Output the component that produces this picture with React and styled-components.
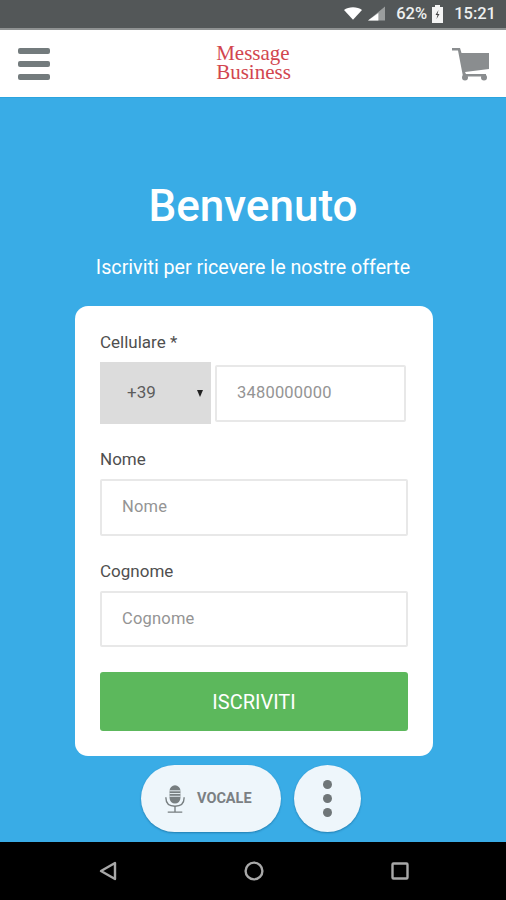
import styled, { createGlobalStyle } from "styled-components";

const GlobalStyle = createGlobalStyle`
  html, body {
    margin: 0;
    padding: 0;
    background: #000;
  }
  * {
    box-sizing: border-box;
  }
`;

const Screen = styled.div`
  width: 506px;
  height: 900px;
  display: flex;
  flex-direction: column;
  font-family: Roboto, "Liberation Sans", sans-serif;
  overflow: hidden;
`;

const StatusBar = styled.div`
  height: 30px;
  flex: none;
  background: #535758;
  border-bottom: 2px solid #8f9292;
  display: flex;
  align-items: center;
  justify-content: flex-end;
  padding: 0 10px 1px 0;
  color: #eef0f0;
  font-size: 16.5px;
  font-weight: 500;
`;

const StatusIcon = styled.svg`
  display: block;
  margin-right: ${(p) => p.$gap}px;
`;

const StatusText = styled.span`
  margin-right: ${(p) => p.$gap || 0}px;
`;

const Header = styled.header`
  height: 67px;
  flex: none;
  background: #fff;
  display: flex;
  align-items: center;
  justify-content: space-between;
  padding: 0 16px 0 18px;
`;

const Burger = styled.div`
  width: 32px;
  display: flex;
  flex-direction: column;
  gap: 7px;
`;

const BurgerBar = styled.span`
  height: 6px;
  border-radius: 2px;
  background: #737b7d;
`;

const Logo = styled.div`
  font-family: "Liberation Serif", serif;
  font-size: 21px;
  line-height: 19px;
  color: #d2464f;
  margin: 0 0 2px 5px;
`;

const Main = styled.main`
  flex: 1;
  background: #39ace6;
  border-top: 1px solid #2ba4df;
  display: flex;
  flex-direction: column;
  align-items: center;
`;

const Title = styled.h1`
  margin: 83px 0 0;
  font-size: 44px;
  line-height: 50px;
  font-weight: 500;
  color: #fff;
`;

const Subtitle = styled.p`
  margin: 25px 0 0;
  font-size: 19.7px;
  line-height: 24px;
  color: #fff;
`;

const Card = styled.div`
  width: 358px;
  height: 450px;
  margin: 26px 0 0 2px;
  padding: 26px 25px 0;
  background: #fff;
  border-radius: 13px;
`;

const Label = styled.div`
  font-size: 17px;
  line-height: 20px;
  color: #4f4f4f;
`;

const PhoneRow = styled.div`
  display: flex;
  align-items: center;
  gap: 4px;
  margin: 10px 0 25px;
`;

const Select = styled.div`
  width: 111px;
  height: 62px;
  background: #dcdcdc;
  display: flex;
  align-items: center;
  justify-content: space-between;
  padding: 0 8px 2px 27px;
  font-size: 17px;
  color: #5c5c5c;
`;

const Caret = styled.span`
  width: 0;
  height: 0;
  margin-top: 2px;
  border-left: 3.5px solid transparent;
  border-right: 3.5px solid transparent;
  border-top: 7px solid #222;
`;

const Field = styled.div`
  width: ${(p) => p.$width}px;
  height: ${(p) => p.$height}px;
  margin: ${(p) => p.$margin || "0"};
  border: 2px solid #e8e8e8;
  border-radius: 2px;
  display: flex;
  align-items: center;
  padding: 0 0 2px ${(p) => p.$pad}px;
  font-size: 16.5px;
  letter-spacing: 0.2px;
  color: #949494;
`;

const SubmitButton = styled.button`
  display: block;
  width: 308px;
  height: 59px;
  border: 0;
  border-radius: 3px;
  background: #5cb85c;
  color: #fff;
  font-family: inherit;
  font-size: 20px;
  padding: 0;
`;

const Actions = styled.div`
  display: flex;
  gap: 13px;
  margin: 9px 0 0 -4px;
`;

const VoiceButton = styled.div`
  width: 140px;
  height: 67px;
  border-radius: 34px;
  background: #eef6fb;
  box-shadow: 0 1px 2px rgba(0, 60, 100, 0.4);
  display: flex;
  align-items: center;
  padding-left: 24px;
  gap: 12px;
  font-size: 14.5px;
  font-weight: 700;
  color: #7b8083;
`;

const MoreButton = styled.div`
  width: 67px;
  height: 67px;
  border-radius: 50%;
  background: #eef6fb;
  box-shadow: 0 1px 2px rgba(0, 60, 100, 0.4);
  display: flex;
  flex-direction: column;
  align-items: center;
  justify-content: center;
  gap: 5px;
`;

const Dot = styled.span`
  width: 9px;
  height: 9px;
  border-radius: 50%;
  background: #6f7678;
`;

const NavBar = styled.nav`
  height: 58px;
  flex: none;
  background: #000;
  display: flex;
  align-items: center;
  justify-content: space-between;
  padding: 0 97px 0 99px;
`;

function App() {
  return (
    <Screen>
      <GlobalStyle />
      <StatusBar>
        <StatusIcon $gap={6} width="18" height="13" viewBox="0 0 20 14">
          <path d="M0 3 C5 -1 15 -1 20 3 L10 14 Z" fill="#fff" />
        </StatusIcon>
        <StatusIcon $gap={11} width="17" height="15" viewBox="0 0 18 15">
          <path d="M18 0 V15 H0 Z" fill="#9a9d9d" />
          <path d="M11 7 V15 H0 Z" fill="#fff" />
        </StatusIcon>
        <StatusText $gap={5}>62%</StatusText>
        <StatusIcon $gap={11} width="11" height="18" viewBox="0 0 11 18">
          <path d="M3 0 H8 V2 H11 V18 H0 V2 H3 Z" fill="#f4f4f4" />
          <path d="M6.5 5 L3.5 10 H5.5 L4.5 14 L7.5 9 H5.5 Z" fill="#444" />
        </StatusIcon>
        <StatusText>15:21</StatusText>
      </StatusBar>
      <Header>
        <Burger>
          <BurgerBar />
          <BurgerBar />
          <BurgerBar />
        </Burger>
        <Logo>
          Message
          <br />
          Business
        </Logo>
        <svg width="38" height="34" viewBox="0 0 38 34">
          <path d="M0 1 H8 L9.5 6 H37 V22 L13 25 L14 27 H34 V29.5 H11 L6 3.5 H0 Z" fill="#8a8d8f" />
          <circle cx="13" cy="30.5" r="3" fill="#8a8d8f" />
          <circle cx="32" cy="30.5" r="3" fill="#8a8d8f" />
        </svg>
      </Header>
      <Main>
        <Title>Benvenuto</Title>
        <Subtitle>Iscriviti per ricevere le nostre offerte</Subtitle>
        <Card>
          <Label>Cellulare *</Label>
          <PhoneRow>
            <Select>
              +39
              <Caret />
            </Select>
            <Field $width={191} $height={57} $pad={20}>
              3480000000
            </Field>
          </PhoneRow>
          <Label>Nome</Label>
          <Field $width={308} $height={57} $pad={20} $margin="10px 0 25px">
            Nome
          </Field>
          <Label>Cognome</Label>
          <Field $width={308} $height={56} $pad={20} $margin="10px 0 25px">
            Cognome
          </Field>
          <SubmitButton>ISCRIVITI</SubmitButton>
        </Card>
        <Actions>
          <VoiceButton>
            <svg width="20" height="30" viewBox="0 0 22 32">
              <rect x="5" y="1" width="12" height="20" rx="6" fill="#777e80" />
              <path d="M5 7 H17 M5 10 H17 M5 13 H17" stroke="#eef6fb" strokeWidth="1" />
              <path d="M1 14 V15 C1 21 5 24 11 24 C17 24 21 21 21 15 V14" fill="none" stroke="#777e80" strokeWidth="1.5" />
              <path d="M11 24 V30 M3 30.5 H19" stroke="#777e80" strokeWidth="1.5" />
            </svg>
            VOCALE
          </VoiceButton>
          <MoreButton>
            <Dot />
            <Dot />
            <Dot />
          </MoreButton>
        </Actions>
      </Main>
      <NavBar>
        <svg width="18" height="20" viewBox="0 0 18 20">
          <path d="M16 2 V18 L2 10 Z" fill="none" stroke="#a8a8a8" strokeWidth="2.4" strokeLinejoin="round" />
        </svg>
        <svg width="20" height="20" viewBox="0 0 20 20">
          <circle cx="10" cy="10" r="8.4" fill="none" stroke="#a8a8a8" strokeWidth="2.4" />
        </svg>
        <svg width="18" height="18" viewBox="0 0 18 18">
          <rect x="1.5" y="1.5" width="15" height="15" rx="1" fill="none" stroke="#a8a8a8" strokeWidth="2.4" />
        </svg>
      </NavBar>
    </Screen>
  );
}

export default App;
